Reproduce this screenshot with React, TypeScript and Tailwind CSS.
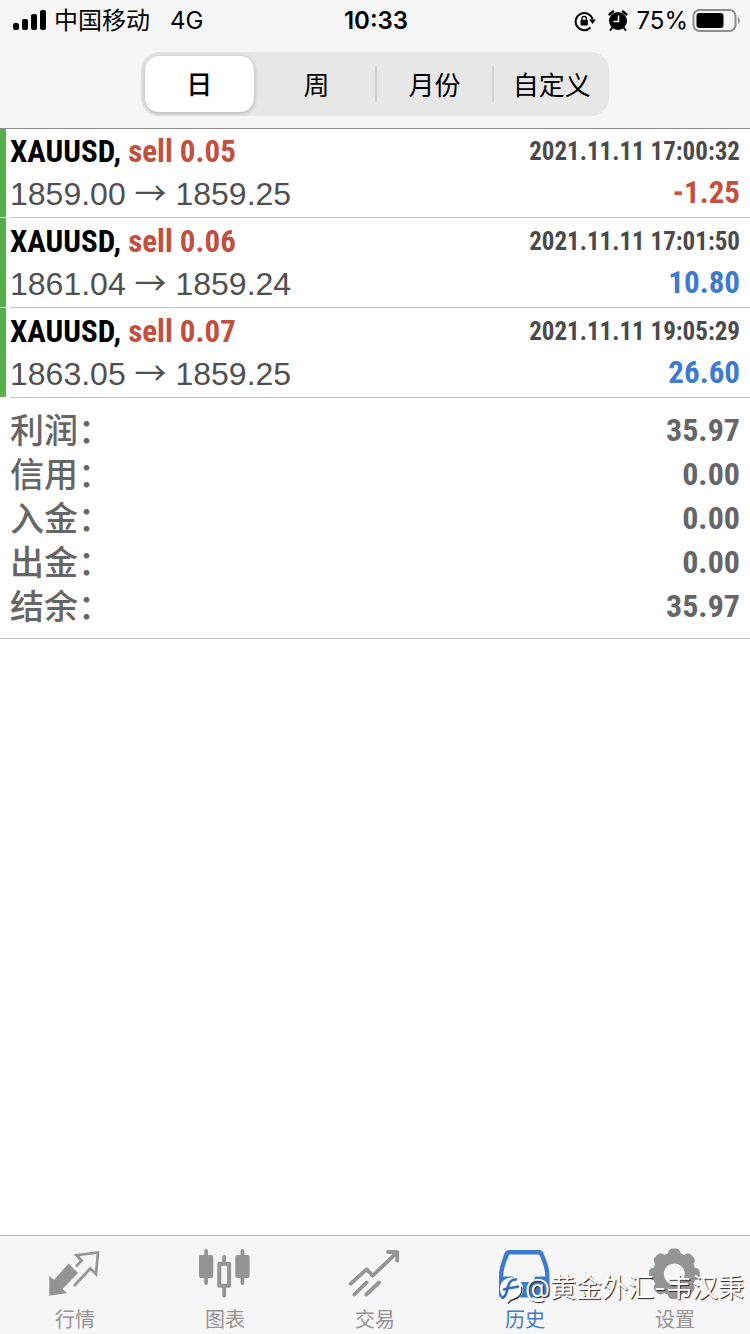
import React from "react";

interface Deal {
  symbol: string;
  volume: string;
  open: string;
  close: string;
  time: string;
  profit: string;
}

const periods = ["日", "周", "月份", "自定义"];

const deals: Deal[] = [
  {
    symbol: "XAUUSD",
    volume: "0.05",
    open: "1859.00",
    close: "1859.25",
    time: "2021.11.11 17:00:32",
    profit: "-1.25",
  },
  {
    symbol: "XAUUSD",
    volume: "0.06",
    open: "1861.04",
    close: "1859.24",
    time: "2021.11.11 17:01:50",
    profit: "10.80",
  },
  {
    symbol: "XAUUSD",
    volume: "0.07",
    open: "1863.05",
    close: "1859.25",
    time: "2021.11.11 19:05:29",
    profit: "26.60",
  },
];

const summary = [
  { label: "利润：", value: "35.97" },
  { label: "信用：", value: "0.00" },
  { label: "入金：", value: "0.00" },
  { label: "出金：", value: "0.00" },
  { label: "结余：", value: "35.97" },
];

const QuotesIcon = () => (
  <svg viewBox="0 0 52 52" className="size-[52px]" fill="none">
    <path
      d="M.3 28.5 5 33 19.5 16.5 29 26 13.5 42 18 46 .3 48.7Z"
      fill="currentColor"
    />
    <path
      d="M27 19.5 32.5 13.5 27.5 8.2 49 5.5 47 27 41.3 21.5 25 39"
      stroke="currentColor"
      strokeWidth="2.7"
    />
  </svg>
);

const ChartIcon = () => (
  <svg viewBox="0 0 52 52" className="size-[52px]" fill="currentColor">
    <rect x="0" y="8" width="14.3" height="23" rx="2" />
    <rect x="5.2" y="2" width="3.8" height="36" rx="1.9" />
    <rect x="36.3" y="8" width="14.3" height="23" rx="2" />
    <rect x="41.5" y="2" width="3.8" height="36" rx="1.9" />
    <path
      fillRule="evenodd"
      d="M20.3 14.7h3V10a1.9 1.9 0 0 1 3.8 0v4.7h3a2 2 0 0 1 2 2v22a2 2 0 0 1-2 2h-3v8a1.9 1.9 0 0 1-3.8 0v-8h-3a2 2 0 0 1-2-2v-22a2 2 0 0 1 2-2ZM22.3 18.7v18h5.8v-18Z"
    />
  </svg>
);

const TradeIcon = () => (
  <svg
    viewBox="0 0 52 52"
    className="size-[52px]"
    fill="none"
    stroke="currentColor"
    strokeWidth="3.8"
    strokeLinecap="round"
    strokeLinejoin="round"
  >
    <path d="M1.7 36.7 17.7 22.3 23.7 28.7 47.5 5.8" />
    <path d="M39 5h9.2v8.5" />
    <path d="M5.3 47.5 17.7 35.5M17.3 47.5 30 35.5" />
  </svg>
);

const HistoryIcon = () => (
  <svg viewBox="0 0 52 52" className="size-[52px]" fill="currentColor">
    <path
      fillRule="evenodd"
      d="M9.5 3h31a4 4 0 0 1 3.8 2.7C47.5 14 50.5 20 50.5 29v19a2.5 2.5 0 0 1-2.5 2.5H2.5A2.5 2.5 0 0 1 0 48V29C0 20 3 14 5.7 5.7A4 4 0 0 1 9.5 3ZM11.5 7.5a2 2 0 0 0-1.9 1.3C7.5 15 4.6 20 4.2 29.5H14l3 5.5h16.5l3-5.5h9.8C46 20 43 15 40.9 8.8a2 2 0 0 0-1.9-1.3Z"
    />
  </svg>
);

const SettingsIcon = () => (
  <svg viewBox="0 0 52 52" className="size-[52px]" fill="currentColor">
    <circle cx="25.3" cy="27" r="16" fill="none" stroke="currentColor" strokeWidth="11" />
    {[0, 45, 90, 135, 180, 225, 270, 315].map((angle) => (
      <rect
        key={angle}
        x="19"
        y="1.5"
        width="12.6"
        height="12"
        rx="5"
        transform={`rotate(${angle} 25.3 27)`}
      />
    ))}
  </svg>
);

const tabs = [
  { label: "行情", icon: QuotesIcon },
  { label: "图表", icon: ChartIcon },
  { label: "交易", icon: TradeIcon },
  { label: "历史", icon: HistoryIcon, active: true },
  { label: "设置", icon: SettingsIcon },
];

const StatusBar = () => (
  <div className="grid h-[42px] grid-cols-3 items-center pl-3 pr-[10px] text-2xl">
    <div className="flex items-center">
      <svg viewBox="0 0 34 22" className="mr-2 h-[22px] w-[34px]">
        <rect x="1" y="13" width="6" height="7" rx="2" />
        <rect x="10" y="9" width="6" height="11" rx="2" />
        <rect x="19" y="4" width="6" height="16" rx="2" />
        <rect x="28" y="0" width="6" height="20" rx="2" />
      </svg>
      <span>中国移动</span>
      <span className="ml-5">4G</span>
    </div>
    <div className="text-center font-semibold">10:33</div>
    <div className="flex items-center justify-end">
      <svg viewBox="0 0 22 22" className="mr-3 size-[22px]" fill="none">
        <path
          d="M16.5 17.5A8.6 8.6 0 1 1 18.6 9.5"
          stroke="black"
          strokeWidth="2"
        />
        <path d="M15 9.5h7l-3.5 4.5Z" fill="black" />
        <rect x="6.5" y="9.8" width="7.4" height="5.6" rx="1" fill="black" />
        <path d="M8 10V8.5a2.2 2.2 0 0 1 4.4 0V10" stroke="black" strokeWidth="1.3" />
      </svg>
      <svg viewBox="0 0 20 22" className="mr-2 h-[22px] w-5" fill="none">
        <circle cx="10" cy="11" r="9" fill="black" />
        <path
          d="M1.5 4.5 5 1.5M18.5 4.5 15 1.5"
          stroke="black"
          strokeWidth="2.4"
          strokeLinecap="round"
        />
        <path
          d="M4.5 17.5 2.5 20M15.5 17.5 17.5 20"
          stroke="black"
          strokeWidth="2"
          strokeLinecap="round"
        />
        <path d="M10.5 5.5v6H5.5" stroke="white" strokeWidth="1.5" />
      </svg>
      <span>75%</span>
      <svg viewBox="0 0 48 24" className="ml-1 h-6 w-12">
        <rect x="1.5" y="1" width="42" height="21" rx="6" fill="none" stroke="#8e8e8e" strokeWidth="2" />
        <rect x="4.5" y="4" width="27" height="15" rx="3" fill="black" />
        <path d="M46 8c2.4 1.2 2.4 5.8 0 7Z" fill="#8e8e8e" />
      </svg>
    </div>
  </div>
);

const DealRow = ({ deal }: { deal: Deal }) => (
  <li className="flex h-[90px]">
    <div className="mb-px w-[6px] bg-[#55b04c]" />
    <div className="ml-1 flex-1 border-b border-[#c3c3c3] pr-[10px] pt-px">
      <div className="flex h-[46px] items-center justify-between font-['Roboto_Condensed'] font-bold">
        <p className="text-[31px]">
          {deal.symbol},{" "}
          <span className="text-[#c2503f]">sell {deal.volume}</span>
        </p>
        <time className="text-[25px] text-[#4a4a4a]">{deal.time}</time>
      </div>
      <div className="flex h-9 items-center justify-between">
        <p className="font-['Liberation_Sans'] text-[32px] leading-9 text-[#505050]">
          {deal.open}{" "}
          <span className="font-['Noto_Sans_CJK_SC'] leading-none">→</span>{" "}
          {deal.close}
        </p>
        <p
          className={`font-['Roboto_Condensed'] text-[31px] font-bold ${
            deal.profit.startsWith("-") ? "text-[#c2503f]" : "text-[#3d7bd0]"
          }`}
        >
          {deal.profit}
        </p>
      </div>
    </div>
  </li>
);

const App: React.FC = () => {
  return (
    <div className="flex min-h-screen flex-col bg-white font-['Inter','Noto_Sans_CJK_SC',sans-serif] text-black">
      <header className="relative bg-[#f6f6f6] pb-3 shadow-[0_1px_0_#8c8c8c]">
        <StatusBar />
        <div className="mx-auto mt-[10px] grid h-16 w-5/8 grid-cols-4 items-center rounded-[18px] bg-[#e7e7e7]">
          {periods.map((period, i) => (
            <button
              key={period}
              type="button"
              className={
                i === 0
                  ? "mx-1 h-14 rounded-[14px] bg-white text-[26px] font-medium shadow-[0_1px_5px_rgba(0,0,0,0.25)]"
                  : i === 1
                    ? "h-9 text-[26px]"
                    : "h-9 border-l-2 border-[#d3d3d3] text-[26px]"
              }
            >
              {period}
            </button>
          ))}
        </div>
      </header>

      <main className="flex-1">
        <ul>
          {deals.map((deal) => (
            <DealRow key={deal.time} deal={deal} />
          ))}
        </ul>
        <dl className="border-b border-[#c3c3c3] px-[10px] py-[10px] text-[#666]">
          {summary.map((item) => (
            <div key={item.label} className="flex h-11 items-center justify-between">
              <dt className="text-[34px] font-medium">{item.label}</dt>
              <dd className="font-['Roboto_Condensed'] text-[32px] font-bold">
                {item.value}
              </dd>
            </div>
          ))}
        </dl>
      </main>

      <nav className="relative grid grid-cols-5 border-t border-[#b2b2b2] bg-[#f6f6f6] pt-[11px]">
        {tabs.map((tab) => (
          <button
            key={tab.label}
            type="button"
            className={`flex flex-col items-center text-xl ${
              tab.active ? "text-[#3d7bd0]" : "text-[#949494]"
            }`}
          >
            <tab.icon />
            <span className="mt-[7px] leading-7">{tab.label}</span>
          </button>
        ))}

        <div className="pointer-events-none absolute right-[6px] top-8 flex items-center text-[26px] text-white">
          <svg viewBox="0 0 26 34" className="h-[34px] w-[26px]" fill="none">
            <circle cx="12.5" cy="18" r="11.5" fill="white" />
            <path
              d="M17 8.5C11 8 9.5 13 8.5 18S5.5 26 3.5 27M5 18.5c5-2.5 9-1 14-3"
              stroke="#2f6bc4"
              strokeWidth="2.6"
              strokeLinecap="round"
            />
            <path
              d="M22.5 16c1.5 7-3 11.5-8 12.5-2 .5-4 2-5.5 4"
              stroke="#333"
              strokeWidth="1.3"
            />
          </svg>
          <span className="[text-shadow:1px_1px_1px_#222]">@黄金外汇-韦汉秉</span>
        </div>
      </nav>
    </div>
  );
};

export default App;
